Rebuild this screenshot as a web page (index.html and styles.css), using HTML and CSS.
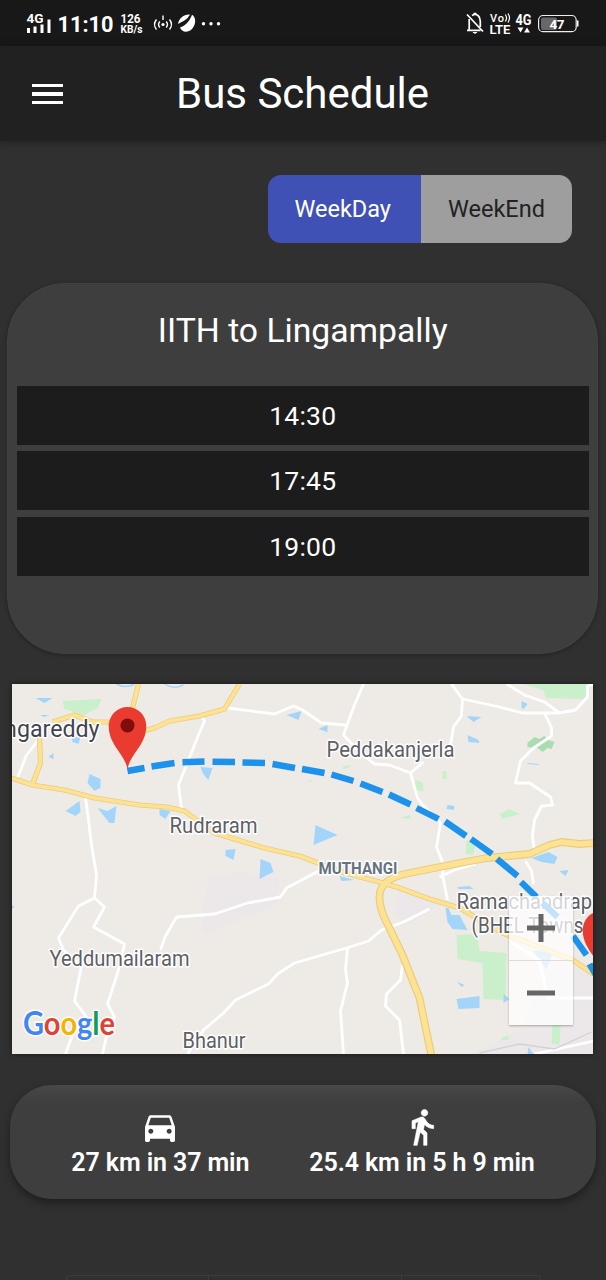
FILE: index.html
```html
<!DOCTYPE html>
<html lang="en">
<head>
<meta charset="utf-8">
<title>Bus Schedule</title>
<link rel="stylesheet" href="styles.css">
</head>
<body>
<div class="screen">
  <div class="status">
    <svg class="status-left" width="210" height="46" viewBox="20 0 210 46" fill="#fff">
      <text x="26.500" y="22.500" font-size="13" font-weight="700" textLength="17" lengthAdjust="spacingAndGlyphs">4G</text>
      <path d="M27 28h3v5h-3zM33.500 26.500h3V33h-3zM40.500 24.500h3V33h-3zM47.500 19.500h3V33h-3z"/>
      <text x="57.500" y="32" font-size="22.500" font-weight="700" textLength="56" lengthAdjust="spacingAndGlyphs">11:10</text>
      <text x="120.500" y="23" font-size="12.500" font-weight="700" textLength="20" lengthAdjust="spacingAndGlyphs">126</text>
      <text x="120.500" y="33" font-size="10.500" font-weight="700" textLength="22" lengthAdjust="spacingAndGlyphs">KB/s</text>
      <g fill="none" stroke="#fff" stroke-width="1.400">
        <path d="M156.500 19.500q-4 5 0 10M159.800 21.500q-2.500 3 0 6M169.500 19.500q4 5 0 10M166.200 21.500q2.500 3 0 6M163 15.500v4.500"/>
      </g>
      <circle cx="163" cy="24.500" r="1.600"/>
      <path d="M178 24C179 18 184 14 190 14.500C187 20 183 21 178 24z"/>
      <path d="M180 27.500C187 25 190 20 192 14.800C196 17 196.500 24 192 29C188 33 181.500 32.500 180 27.500z"/>
      <circle cx="203.500" cy="23.800" r="1.700"/><circle cx="211" cy="23.800" r="1.700"/><circle cx="218.500" cy="23.800" r="1.700"/>
    </svg>
    <svg class="status-right" width="120" height="46" viewBox="462 0 120 46" fill="#fff">
      <g fill="none" stroke="#fff" stroke-width="1.700">
        <path d="M467 14.500L483 31.500M467 30.300h13.500M469.200 30V19M472 15.500Q475 13.500 478 15.500Q480.300 17.500 480.300 21V27"/>
      </g>
      <path d="M472.500 32h5q-2.500 3.500-5 0zM473.500 12.800h3v2h-3z"/>
      <text x="490" y="21.500" font-size="11" font-weight="500" textLength="14">Vo</text>
      <path d="M505.300 14.500q2.500 3.500 0 7M508 13.500q3 4.500 0 9" fill="none" stroke="#fff" stroke-width="1.200"/>
      <text x="489.500" y="34" font-size="13" font-weight="600" textLength="21" lengthAdjust="spacingAndGlyphs">LTE</text>
      <text x="515.500" y="24.500" font-size="14" font-weight="700" textLength="16" lengthAdjust="spacingAndGlyphs">4G</text>
      <path d="M517.500 27.500h6l-3 5zM524 32.500h6l-3-5z"/>
      <rect x="541" y="17.500" width="16" height="12.500" rx="2" fill="#686868"/>
      <rect x="538.600" y="15.500" width="37.600" height="16.200" rx="4.500" fill="none" stroke="#eee" stroke-width="1.200"/>
      <path d="M577 20.500h1.500v6H577z"/>
      <text x="549.500" y="28.500" font-size="13.500" font-weight="700" textLength="15">47</text>
    </svg>
  </div>
  <header class="appbar">
    <div class="menu"><i></i><i></i><i></i></div>
    <h1 class="title">Bus Schedule</h1>
  </header>
  <main class="content">
    <div class="toggle">
      <div class="toggle-item selected">WeekDay</div>
      <div class="toggle-item">WeekEnd</div>
    </div>
    <section class="card">
      <h2 class="card-title">IITH to Lingampally</h2>
      <div class="times">
        <div class="time">14:30</div>
        <div class="time">17:45</div>
        <div class="time">19:00</div>
      </div>
    </section>
    <section class="map">
      <svg width="581" height="370" viewBox="12.500 684 581 370">
        <rect x="12" y="684" width="582" height="370" fill="#eeebe6"/>
        <path fill="#ece8ea" d="M210 877L240 872L280 878L278 905L240 920L203 934L203 905zM560 960L594 975V1054H470L520 1030L540 985zM400 885L440 905L410 925L395 915z"/>
        <g fill="#c9efcb">
          <path d="M63 701L102 699L98 708L85 715L65 709zM523 684H590L585 699L546 698L544 690zM457 935L478 934L480 951L507 953L506 1000L484 999L483 963L458 959zM416 780l7 2 1 9-9-1zM443 771h4v8h-4zM500 814l10-5 10 5-17 5zM467 840l9 3-2 12-8-1zM553 1025h8l-1 20-8-2zM502 1037l7-1v4h-7zM344 766l8-1-3 3-6 1zM309 780h6l-5 2zM400 818l10-3 1 4z"/>
          <path fill="#a9ddb0" d="M528 743L535 737L540 739L545 736L549 740L555 742L552 749L548 748L543 752L538 748L528 747z"/>
        </g>
        <g fill="#a3d5fb">
          <path d="M36 698l17 0-8 5zM41 715h9l-6 2zM72 737l9 0-2 7-6-2zM49 757l5-4v6zM90 774l11 5v9l-6 3-7-8zM66 811l14-10 1 11-5 4zM98 808l10 3 9-5-2 17h-5zM160 809l11 2-5 8-6-4zM201 767l12 1-4 12q-6-5-8-13zM287 715l15-4-3 9zM319 729l9-4v7zM316 825l22 10-24 10zM226 850l10-1-2 11-8-4zM261 859l10 4 3 9-14 7zM467 716l15 1-8 5zM468 735l11 5 1 3-11-1zM522 701l6 3-4 5-2-1zM528 763l12 1-2 1-10-1zM448 805l7 1-1 4-7-1zM532 858l17-6 9 5-3 7-13-2zM560 871l9-1-3 6zM340 876l15 4-13 1zM446 908l3 0 3 7 8 0 8 15-15-1-5-7zM458 887l12-1 4 3-15 0zM457 999l23-3v12l-21 1zM504 994l6 5-6 4zM458 982l7 3-3 2zM529 1047l5 7h-6zM533 950l20 3-6 17zM12 905l3 2-3 2z"/>
          <path d="M117 684q9 5 18 0M165 684q9 6 19 1" fill="none" stroke="#a3d5fb" stroke-width="1.500"/>
        </g>
        <g fill="none" stroke="#fff" stroke-width="2.800" stroke-linejoin="round">
          <path d="M41 736L35 745L27 755L18 778M86 797L89 820L92 845L97 875L95 898L79 906L59 938L64 950L82 966L75 1001L87 1017L73 1035L66 1054M95 898L105 907L94 927L125 944L119 970L108 1004L115 1017L108 1032L103 1054"/>
          <path d="M202 716L205 721L199 735L179 785L182 809M161 950L166 936L177 917L215 914L248 903L281 897L287 888L325 868M228 708L275 714L294 706L303 710L322 723L346 725M364 684L355 705L344 735L360 752L375 764L390 765L411 773L424 762M411 773L418 798L424 806L441 823L437 847L444 865L443 875M452 684L463 699L462 716L454 727L451 745"/>
          <path d="M463 699L500 707L523 713H560L545 702L525 695L507 684M560 713L576 710L588 697V686L594 684M545 713L552 728V736L534 748L521 761L516 783L530 783L551 797L553 805L542 806L535 820L533 836L535 853M526 861L532 871L534 884M443 875L448 900M440 877L455 870L476 864"/>
          <path d="M188 1054L204 1030L224 1013L236 1000L269 984L278 974L295 963L347 948L369 941L382 930L404 922L430 909M348 948L346 970L348 983L341 1011L344 1054M403 965L401 980L387 994L386 1006L400 1020L404 1054M511 942L540 960L548 998H594M535 1054L594 1041"/>
        </g>
        <path d="M480 1053L520 1044L555 1049L592 1032" fill="none" stroke="#d3d1d2" stroke-width="1.300"/>
        <g fill="none" stroke-linejoin="round" stroke="#e8cd7c">
          <path stroke-width="5.200" d="M12 778L33 785L65 790L95 798L140 805L167 807L185 811L215 833L265 848L300 856L345 873L380 882L400 888L430 899L460 908L503 933L573 960L594 974"/>
          <path stroke-width="5.200" d="M53 722L75 715L93 722H108L140 732L155 728L170 721L200 716L225 709L240 684M139 684L133 708M33 784L41 763L40 735"/>
          <path stroke-width="7.800" d="M594 843L580 844L562 842L550 845L530 854L487 858L450 865L405 874Q380 880 380 897Q380 908 386 920L403 955L420 998L432 1056"/>
        </g>
        <g fill="none" stroke-linejoin="round" stroke="#fde293">
          <path stroke-width="3.600" d="M12 778L33 785L65 790L95 798L140 805L167 807L185 811L215 833L265 848L300 856L345 873L380 882L400 888L430 899L460 908L503 933L573 960L594 974M53 722L75 715L93 722H108L140 732L155 728L170 721L200 716L225 709L240 684M139 684L133 708M33 784L41 763L40 735"/>
          <path stroke-width="5.400" d="M594 843L580 844L562 842L550 845L530 854L487 858L450 865L405 874Q380 880 380 897Q380 908 386 920L403 955L420 998L432 1056"/>
        </g>
        <g class="place">
          <text x="-8" y="737" font-size="24" fill="#3f4451" textLength="108" lengthAdjust="spacingAndGlyphs">angareddy</text>
          <text x="327" y="756.500" textLength="128" lengthAdjust="spacingAndGlyphs">Peddakanjerla</text>
          <text x="170" y="832.500" textLength="88" lengthAdjust="spacingAndGlyphs">Rudraram</text>
          <text x="50" y="966" textLength="140" lengthAdjust="spacingAndGlyphs">Yeddumailaram</text>
          <text x="183" y="1047.500" textLength="63" lengthAdjust="spacingAndGlyphs">Bhanur</text>
          <text x="319" y="873.500" font-size="16.500" font-weight="700" fill="#66727f" textLength="79" lengthAdjust="spacingAndGlyphs">MUTHANGI</text>
          <text x="457" y="909" textLength="135.500" lengthAdjust="spacingAndGlyphs">Ramachandrap</text>
          <text x="472" y="933" textLength="112" lengthAdjust="spacingAndGlyphs">(BHEL Towns</text>
        </g>
        <path fill="none" stroke="#1c92ec" stroke-width="6.400" d="M128 771L145 768M152 766.500L175 763M183 762.300L205 761.500M213 761.800L235.500 762M243 762.500L265.500 763M273 764L295.500 768M302.500 769L325 773M332 774.500L354 781M361 783.500L383 792M389.500 794.500L411 804.500M417 808L439 819M445.500 821.500L466.500 836M471.500 839L492.500 854M497.500 859L518 876M521.500 882L537 897M543 903L558 917M573.500 936L587 955M590 964L597 976"/>
        <g fill="#e93b30">
          <path d="M128 770.500C127 755 109.200 746 109.200 726A18.800 19 0 0 1 146.800 726C146.800 746 129 755 128 770.500z"/>
          <circle cx="128" cy="725.500" r="7" fill="#7f0d0b"/>
          <path d="M602 974.500C601 959 583.200 950 583.200 930A18.800 19 0 0 1 620.800 930C620.800 950 603 959 602 974.500z"/>
        </g>
        <text class="brand" x="23.500" y="1034.500" textLength="92" lengthAdjust="spacingAndGlyphs"><tspan fill="#4285f4">G</tspan><tspan fill="#db4437">o</tspan><tspan fill="#f4b400">o</tspan><tspan fill="#4285f4">g</tspan><tspan fill="#0f9d58">l</tspan><tspan fill="#db4437">e</tspan></text>
      </svg>
      <div class="zoom">
        <div class="zoom-btn"><svg width="28" height="28" viewBox="0 0 28 28"><path d="M11.500 0h5v11.500H28v5H16.500V28h-5V16.500H0v-5h11.500z" fill="#666"/></svg></div>
        <div class="zoom-btn"><svg width="28" height="28" viewBox="0 0 28 28"><path d="M0 11.500h28v5H0z" fill="#666"/></svg></div>
      </div>
    </section>
    <section class="travel">
      <div class="mode">
        <svg width="40" height="40" viewBox="0 0 24 24" fill="#fff"><path d="M18.920 6.010C18.720 5.420 18.160 5 17.500 5h-11c-.66 0-1.210.42-1.420 1.010L3 12v8c0 .55.45 1 1 1h1c.55 0 1-.45 1-1v-1h12v1c0 .55.45 1 1 1h1c.55 0 1-.45 1-1v-8l-2.080-5.990zM6.500 16c-.83 0-1.500-.67-1.500-1.500S5.670 13 6.500 13s1.500.67 1.500 1.500S7.330 16 6.500 16zm11 0c-.83 0-1.500-.67-1.500-1.500s.67-1.500 1.500-1.500 1.500.67 1.500 1.500-.67 1.500-1.500 1.500zM5 11l1.500-4.500h11L19 11H5z"/></svg>
        <span class="mode-text drive">27 km in 37 min</span>
      </div>
      <div class="mode">
        <svg width="40" height="40" viewBox="0 0 24 24" fill="#fff" stroke="#fff" stroke-width=".35"><path d="M13.500 5.500c1.100 0 2-.9 2-2s-.9-2-2-2-2 .9-2 2 .9 2 2 2zM9.800 8.900L7 23h2.100l1.800-8 2.100 2v6h2v-7.500l-2.100-2 .6-3C14.800 12 16.800 13 19 13v-2c-1.900 0-3.500-1-4.300-2.400l-1-1.600c-.4-.6-1-1-1.700-1-.3 0-.5.1-.8.1L6 8.300V13h2V9.600l1.800-.7"/></svg>
        <span class="mode-text walk">25.4 km in 5 h 9 min</span>
      </div>
    </section>
    <div class="bottom-tabs"><i></i><i></i><i></i></div>
  </main>
</div>
</body>
</html>
```
FILE: styles.css
```css
* { box-sizing: border-box; }
body { margin: 0; background: #303030; color: #fff; font-family: Roboto, sans-serif; }
.screen { width: 606px; height: 1280px; overflow: hidden; display: flex; flex-direction: column; }
.status { height: 46px; flex: none; background: #181818; display: flex; justify-content: space-between; padding: 0 24px 0 20px; }
.appbar { height: 95px; flex: none; background: #212121; display: flex; align-items: center; padding: 1px 0 0 32px; box-shadow: 0 1px 8px rgba(0,0,0,.35); }
.menu { width: 31px; display: flex; flex-direction: column; gap: 5px; }
.menu i { height: 3.500px; background: #fff; }
.title { margin: 0 0 0 113px; font-size: 42px; font-weight: 400; line-height: 50px; white-space: nowrap; }
.content { display: flex; flex-direction: column; padding-top: 34px; }
.toggle { align-self: flex-end; margin-right: 34px; width: 304.500px; height: 68px; display: flex; border-radius: 13px; overflow: hidden; font-size: 23.500px; }
.toggle-item { flex: 1; display: flex; align-items: center; justify-content: center; color: #222; background: #9e9e9e; }
.toggle-item.selected { flex: none; width: 153.500px; padding-right: 3px; background: #3f51b5; color: #fff; }
.card { margin: 40px 8px 0 7px; height: 371px; border-radius: 58px; background: #3e3e3e; border: 1px solid #424242; box-shadow: 0 1px 4px rgba(0,0,0,.3); padding: 26px 8.500px 0 9px; }
.card-title { margin: 0; font-size: 33.700px; line-height: 41px; font-weight: 400; text-align: center; }
.times { display: flex; flex-direction: column; gap: 6.500px; margin-top: 34.500px; }
.time { height: 59px; background: #1c1c1c; display: flex; align-items: center; justify-content: center; font-size: 26.500px; letter-spacing: .2px; }
.map { position: relative; width: 581px; height: 370px; margin: 30px 0 0 12.400px; box-shadow: 0 0 5px rgba(0,0,0,.5); overflow: hidden; }
.map > svg { display: block; }
.place { font-size: 22px; fill: #5d6066; stroke: #fff; stroke-width: 3px; stroke-linejoin: round; paint-order: stroke; }
.brand { font-family: Lato, sans-serif; font-size: 32px; font-weight: 700; stroke: #fff; stroke-width: 3px; paint-order: stroke; }
.zoom { position: absolute; right: 20px; bottom: 29px; width: 64px; height: 129px; background: rgba(255,255,255,.74); box-shadow: 0 1px 2px rgba(0,0,0,.3); display: flex; flex-direction: column; }
.zoom-btn { flex: 1; display: flex; align-items: center; justify-content: center; }
.zoom-btn + .zoom-btn { border-top: 1px solid #ddd; }
.travel { margin: 31px 10px 0; height: 114px; border-radius: 42px; background: linear-gradient(#484848, #3e3e3e 18px); box-shadow: 0 4px 9px rgba(0,0,0,.4); display: flex; justify-content: center; gap: 60px; padding-top: 22px; }
.mode { display: flex; flex-direction: column; align-items: center; }
.mode-text { font-size: 25px; line-height: 32px; font-weight: 600; letter-spacing: -.1px; white-space: nowrap; }
.bottom-tabs { width: 475px; height: 20px; margin: 76px 0 0 66px; display: grid; grid-template-columns: 141px 193px 1fr; border: 1px solid #3d3d3d; border-radius: 4px; }
.bottom-tabs i + i { border-left: 1px solid #3d3d3d; }
```
